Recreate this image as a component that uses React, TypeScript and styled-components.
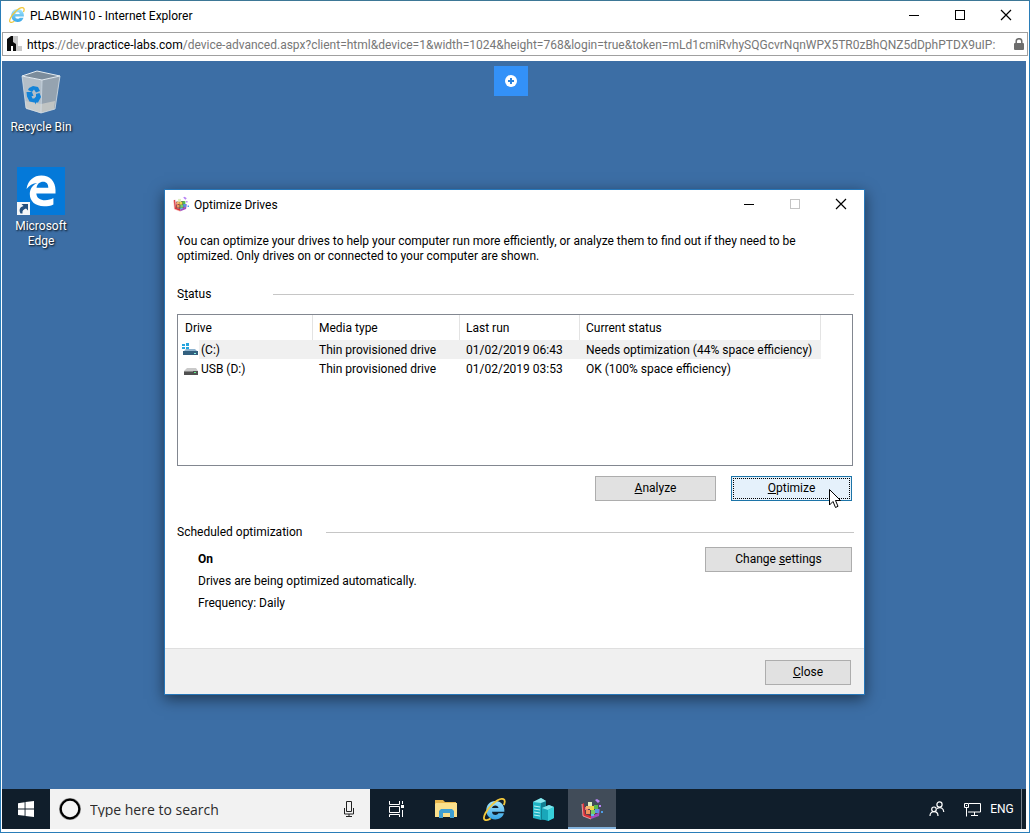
import React from 'react';
import styled, { createGlobalStyle, css } from 'styled-components';

const Global = createGlobalStyle`
  * { box-sizing: border-box; }
  body { margin: 0; font-family: Roboto, "Open Sans", sans-serif; font-size: 12px; line-height: 15px; color: #000; }
  button, input { font: inherit; color: inherit; }
  svg { display: block; flex: none; }
`;

const Frame = styled.div`
  display: flex;
  flex-direction: column;
  min-height: 100vh;
  border: 1px solid #2a7db8;
  border-top-color: #3d7796;
  background: #fff;
`;

const TitleBar = styled.header`
  display: flex;
  align-items: center;
  flex: none;
  height: 28px;
  padding-left: 8px;
  background: #fff;
`;

const WindowTitle = styled.h1`
  flex: 1;
  margin: 0 0 0 5px;
  padding-top: 2px;
  font-size: 12px;
  font-weight: 400;
`;

const CaptionButton = styled.button`
  display: grid;
  place-items: center;
  width: 46px;
  height: 28px;
  padding: 0;
  border: 0;
  background: none;
  color: #000;
  &:disabled { color: #c4c4c4; }
`;

const AddressBar = styled.div`
  display: flex;
  align-items: center;
  gap: 5px;
  flex: none;
  height: 24px;
  margin: 3px 1px 5px;
  padding: 0 3px 0 4px;
  border: 1px solid #a0a0a0;
`;

const Url = styled.div`
  flex: 1;
  min-width: 0;
  overflow: hidden;
  padding-top: 2px;
  white-space: nowrap;
  color: #777;
  line-height: 18px;
  b { font-weight: 400; color: #000; }
`;

const Screen = styled.div`
  display: flex;
  flex-direction: column;
  flex: 1;
  margin: 0 3px 3px 1px;
`;

const Desktop = styled.main`
  position: relative;
  flex: 1;
  min-height: 660px;
  background: #3c6ea5;
`;

const Shortcuts = styled.nav`
  display: flex;
  flex-direction: column;
  gap: 32px;
  width: 78px;
  padding-top: 9px;
`;

const Shortcut = styled.a`
  display: flex;
  flex-direction: column;
  align-items: center;
  gap: 4px;
  color: #fff;
  text-align: center;
  text-decoration: none;
  text-shadow: 1px 1px 2px #000;
`;

const ToolbarTab = styled.button`
  position: absolute;
  top: 5px;
  left: 50%;
  display: grid;
  place-items: center;
  width: 34px;
  height: 30px;
  padding: 0;
  border: 0;
  transform: translateX(-20px);
  background: #3391f8;
`;

const Dialog = styled.section`
  position: absolute;
  top: 128px;
  left: 162px;
  width: 701px;
  border: 1px solid #2676b8;
  background: #fff;
  box-shadow: 0 4px 14px rgba(0, 0, 0, 0.5);
`;

const DialogBody = styled.div`
  padding: 16px 10px 37px 12px;
`;

const Intro = styled.p`
  margin: 0 0 22px;
`;

const SectionHeading = styled.h2<{ $label: number }>`
  display: grid;
  grid-template-columns: ${p => p.$label}px 1fr;
  align-items: center;
  margin: 0;
  font-size: 12px;
  font-weight: 400;
  line-height: 16px;
  &::after { content: ""; height: 1px; background: #c6c6c6; }
`;

const ListBox = styled.div`
  height: 152px;
  margin: 12px 1px 10px 0;
  border: 1px solid #828790;
`;

const DriveTable = styled.table`
  width: 643px;
  border-collapse: separate;
  border-spacing: 0;
  table-layout: fixed;
`;

const HeadCell = styled.th<{ $width: number }>`
  width: ${p => p.$width}px;
  height: 25px;
  padding: 2px 0 0 6px;
  border-right: 1px solid #e3e3e3;
  font-weight: 400;
  text-align: left;
  &:first-child { padding-left: 7px; }
`;

const Row = styled.tr<{ $selected?: boolean }>`
  background: ${p => (p.$selected ? '#f0f0f0' : 'transparent')};
`;

const Cell = styled.td`
  height: 19px;
  padding: 2px 0 0 6px;
  white-space: nowrap;
`;

const DriveCell = styled(Cell)`
  padding: 0;
`;

const DriveName = styled.div`
  display: flex;
  align-items: center;
  gap: 2px;
`;

const DriveLabel = styled.span`
  padding-top: 2px;
`;

const DriveIcon = styled.span`
  display: flex;
  justify-content: flex-end;
  align-items: center;
  width: 21px;
  height: 19px;
  padding-right: 1px;
  background: #fff;
`;

const ButtonRow = styled.div`
  display: flex;
  justify-content: flex-end;
  gap: 15px;
  margin: 0 2px 23px 0;
`;

const PushButton = styled.button<{ $width: number; $focused?: boolean }>`
  width: ${p => p.$width}px;
  height: 25px;
  padding: 0;
  border: 1px solid #adadad;
  background: #e1e1e1;
  ${p => p.$focused && css`
    border-color: #1c74a8;
    background: #e5f1fb;
    outline: 1px dotted #000;
    outline-offset: -3px;
  `}
`;

const Schedule = styled.div`
  display: flex;
  justify-content: space-between;
  align-items: flex-start;
  margin: 6px 2px 0 21px;
`;

const ScheduleText = styled.div`
  display: grid;
  gap: 7px;
  padding-top: 6px;
  p { margin: 0; }
`;

const ScheduleAction = styled.div`
  padding-top: 1px;
`;

const DialogFooter = styled.footer`
  display: flex;
  justify-content: flex-end;
  padding: 11px 13px 9px;
  border-top: 1px solid #dfdfdf;
  background: #f0f0f0;
`;

const Pointer = styled.svg`
  position: absolute;
  top: 299px;
  left: 664px;
`;

const Taskbar = styled.footer`
  display: flex;
  flex: none;
  height: 40px;
  background: #101e2b;
  color: #fff;
`;

const RunningApps = styled.div`
  display: flex;
  padding-left: 2px;
`;

const TaskButton = styled.button<{ $active?: boolean }>`
  display: grid;
  place-items: center;
  width: ${p => (p.$active ? 48 : 49)}px;
  height: 40px;
  padding: 0;
  border: 0;
  background: ${p => (p.$active ? '#414c59' : 'none')};
  box-shadow: ${p => (p.$active ? 'inset 0 -2px #84b4de' : 'none')};
`;

const StartButton = styled(TaskButton)`
  width: 48px;
`;

const SearchBox = styled.label`
  display: flex;
  align-items: center;
  gap: 8px;
  width: 320px;
  padding: 0 15px 0 8px;
  background: #f2f2f2;
`;

const SearchInput = styled.input`
  flex: 1;
  min-width: 0;
  padding: 0;
  border: 0;
  background: none;
  font-family: "Open Sans", sans-serif;
  font-size: 14px;
  outline: 0;
  &::placeholder { color: #2b2b2b; opacity: 1; }
`;

const Tray = styled.div`
  display: flex;
  align-items: center;
  margin-left: auto;
`;

const TrayButton = styled.button<{ $width: number }>`
  display: grid;
  place-items: center;
  width: ${p => p.$width}px;
  height: 40px;
  padding: 0;
  border: 0;
  background: none;
`;

const ShowDesktop = styled.button`
  width: 5px;
  height: 40px;
  padding: 0;
  border: 0;
  border-left: 1px solid #76808a;
  background: none;
`;

const MinimizeIcon = () => (
  <svg width="10" height="10"><path d="M0 5.500H10" stroke="currentColor" /></svg>
);
const MaximizeIcon = () => (
  <svg width="10" height="10"><rect x=".5" y=".5" width="9" height="9" fill="none" stroke="currentColor" /></svg>
);
const CloseIcon = () => (
  <svg width="12" height="12"><path d="M1 1 11 11M11 1 1 11" stroke="currentColor" strokeWidth="1.2" /></svg>
);

const IeIcon = ({ size }: { size: number }) => (
  <svg width={size} height={size} viewBox="0 0 24 24">
    <defs>
      <linearGradient id="ieBlue" x2="0" y2="1">
        <stop stopColor="#a6e6fd" /><stop offset="1" stopColor="#35a5e6" />
      </linearGradient>
    </defs>
    <path d="M12.800 3C7.300 3 3.400 7.300 3.400 12.800S7.300 22.500 12.800 22.500c4.300 0 7.700-2.400 9-6.500h-5.700c-.7 1.200-1.700 1.700-3.100 1.700-2.200 0-3.500-1.300-3.600-3.400h12.900c.6-6.500-3.400-11.300-9.500-11.300Zm-3.400 7.500c.4-1.800 1.600-2.800 3.500-2.800 1.800 0 3 1 3.300 2.800Z" fill="url(#ieBlue)" />
    <path d="M21.700 7.500c1.500-3.200 1.300-5.600-.4-6.300-2.300-.9-7 1.300-11.500 5.500C3.600 12.600-.2 19.500 1.300 22.200c.9 1.600 3.600 1 6.700-.8" fill="none" stroke="#f2c83c" strokeWidth="1.900" />
  </svg>
);

const SiteIcon = () => (
  <svg width="15" height="16" viewBox="0 0 15 16">
    <path d="M6 0h5v10h4v5H6Z" fill="#c9c9c9" />
    <path d="M0 3 4 0h2v6l3 2v7H6v-5H4v5H0Z" fill="#0c0c0c" />
  </svg>
);

const LockIcon = () => (
  <svg width="10" height="13" viewBox="0 0 10 13">
    <rect y="5" width="10" height="7" rx="1" fill="#6d6d6d" />
    <path d="M2.200 6V3.500a2.800 2.800 0 0 1 5.600 0V6" fill="none" stroke="#6d6d6d" strokeWidth="1.500" />
  </svg>
);

const RecycleBinIcon = () => (
  <svg width="48" height="46" viewBox="0 0 48 46">
    <path d="M5 6 25 10 24 43 9 38Z" fill="#b3bec8" />
    <path d="M25 10 43 6 38 39 24 43Z" fill="#95a3b0" />
    <path d="M8 31 24 34 38 31 37 39 24 43 9 39Z" fill="#d3d2cc" opacity=".7" />
    <path d="M5 6 20 1 43 6 25 10Z" fill="#7b8c9c" stroke="#e3ebf1" />
    <path d="M5 6 9 38 24 43 38 39 43 6M25 10 24 43" fill="none" stroke="#d5dfe7" strokeWidth=".8" />
    <g fill="#1383d8">
      <path d="m12 18 4-2 5 1 2 4-4 1.500-2-3-2 2.500-4-2Z" />
      <path d="m9.500 22 5.500 0 1.500 4-2 0 1 2.500 2 0 0 4-5-1-2.500-5Z" />
      <path d="m19 24 3.500-1 1.500 4-3 5.500-2 0 0 2-3-4.500 3-3.500 0 2Z" />
    </g>
  </svg>
);

const EdgeIcon = () => (
  <svg width="48" height="48" viewBox="0 0 48 48">
    <rect width="48" height="48" fill="#0479d9" />
    <path d="M9.500 22C11 13 17 8.500 24.300 8.500 33 8.500 38.500 14.500 38.500 23v3.500H19.300c.3 4.500 4 6.800 8.700 6.800 3.400 0 6.200-.9 8.400-2.200v6.300c-2.900 1.400-5.700 1.900-9.400 1.900-8.600 0-14.200-4.800-14.200-12.200 0-5.300 2.900-9 7.600-11.100-4.700.3-8.300 2.600-10.900 6Zm10-1.200h11.800c0-3.800-1.800-6-5.100-6-3.600 0-6 2.300-6.700 6Z" fill="#fff" />
    <rect y="35" width="13" height="13" fill="#f4f6f8" />
    <path d="M3.500 46.500c-2-4-.5-6.500 3-7.500L4.500 37H11v6.500l-2-2C6.500 42.500 5 43.500 5.500 46.500Z" fill="#24507f" />
  </svg>
);

const DefragIcon = ({ size }: { size: number }) => (
  <svg width={size} height={size} viewBox="0 0 22 22">
    <path d="M1 6 3 5 4 16 10 18 10 21 2 18Z" fill="#dc3038" />
    <path d="M10 18 17 15 17 12 19 11 18 18 10 21Z" fill="#a04cc0" />
    <path d="M4 8 15 7 17 15 10 18 4 16Z" fill="#5a3c48" />
    <path d="M4 9h3v3H4Z" fill="#e8757c" />
    <path d="M7 4h4v4H7Z" fill="#dff0c0" />
    <path d="M5 8h4v3H5Z" fill="#f2b66c" />
    <path d="M9 8h4v4H9Z" fill="#f0d548" />
    <path d="M13 7h4v4h-4Z" fill="#58b84e" />
    <path d="M5 12h4v4H5Z" fill="#f0945c" />
    <path d="M10 12h4v4h-4Z" fill="#78cc66" />
    <path d="M14 11h4v4h-4Z" fill="#5a92e2" />
    <path d="M10 16h3v2h-3Z" fill="#58c2e0" />
    <path d="M14 2 16 1 19 3 17 5ZM18 7h2v2h-2Z" fill="#b783f4" />
    <path d="M20 13h2v2h-2Z" fill="#4d9de8" />
    <path d="M1 6 2 18 10 21" fill="none" stroke="#f7b4b0" strokeWidth=".8" />
  </svg>
);

const SystemDriveIcon = () => (
  <svg width="16" height="14" viewBox="0 0 16 14">
    <path d="M0 1h3v2H0ZM4 0h3v3H4ZM0 4h3v2H0ZM4 4h3v3H4Z" fill="#27a5de" />
    <path d="M4 6h9l3 3H1Z" fill="#8fb4cf" />
    <path d="M1 8h15v4H1Z" fill="#33607f" />
    <path d="M12 10h2v1h-2Z" fill="#8cf5e4" />
  </svg>
);

const UsbDriveIcon = () => (
  <svg width="14" height="14" viewBox="0 0 14 14">
    <path d="M3 6h9l2 3H0Z" fill="#c9c9c9" />
    <path d="M0 9h14v4H0Z" fill="#505050" />
    <path d="M0 9h9v1H0Z" fill="#888" />
    <path d="M10 10h2v1h-2Z" fill="#5ff08a" />
  </svg>
);

const WindowsIcon = () => (
  <svg width="16" height="16" viewBox="0 0 16 16">
    <path d="M0 2.200 6.600 1.300V7.600H0ZM7.500 1.100 16 0V7.600H7.500ZM0 8.500H6.600V14.800L0 13.900ZM7.500 8.500H16V16L7.500 14.900Z" fill="#fff" />
  </svg>
);

const CortanaIcon = () => (
  <svg width="24" height="24" viewBox="0 0 24 24">
    <circle cx="12" cy="12" r="9.500" fill="none" stroke="#9b9b9b" strokeWidth="3" />
    <circle cx="12" cy="12" r="9.300" fill="#f5f5f5" stroke="#000" strokeWidth="2.200" />
  </svg>
);

const MicIcon = () => (
  <svg width="12" height="18" viewBox="0 0 12 18">
    <path d="M3.500 1.500h5v10h-5ZM1.500 8v6h9V8M6 14v3M3 16.500h6" fill="none" stroke="#222" />
  </svg>
);

const TaskViewIcon = () => (
  <svg width="17" height="16" viewBox="0 0 17 16">
    <path d="M1.500 0v3.500h10V0M1.500 5.500h10v6h-10ZM1.500 16v-2.500h10V16M14.500 0v3M14.500 9v7" fill="none" stroke="#fff" />
    <path d="M13 4h3v3h-3Z" fill="#fff" />
  </svg>
);

const FolderIcon = () => (
  <svg width="22" height="20" viewBox="0 0 22 20">
    <path d="M0 1h8l2 2h11v15H0Z" fill="#e8b64c" />
    <path d="M1 4h21v14H0V5Z" fill="#fbe08c" />
    <path d="M4 19v-7l2-2h11l2 2v7h-4v-5H8v5Z" fill="#3f9fd2" />
  </svg>
);

const ServerIcon = () => (
  <svg width="23" height="23" viewBox="0 0 23 23">
    <path d="M1 4 9 0 14 3V22L9 22 1 20Z" fill="#20b4c5" />
    <path d="M9 4 14 3V22H9Z" fill="#107f92" />
    <path d="M1 4 9 0 14 3 9 5Z" fill="#8ce9ef" />
    <path d="M2 8l6 1M2 11l6 1M2 14l6 1M2 17l6 1" stroke="#b7f4f6" />
    <path d="M10 10 17 7 22 9V20L16 23 10 21Z" fill="#19a7ba" />
    <path d="M10 10 17 7 22 9 16 12Z" fill="#7fe5ec" />
    <path d="M16 12 22 9V20L16 23Z" fill="#37cfda" />
  </svg>
);

const PeopleIcon = () => (
  <svg width="16" height="16" viewBox="0 0 16 16" fill="none" stroke="#fff" strokeWidth="1.200">
    <circle cx="10.500" cy="3.500" r="2.600" />
    <circle cx="5" cy="8.300" r="2.300" />
    <path d="M1 15c0-2.700 1.500-4.300 4-4.300S9 12.300 9 15M8 7.500c3.500-2 6.500-.3 6.800 3.500" />
  </svg>
);

const NetworkIcon = () => (
  <svg width="17" height="15" viewBox="0 0 17 15" fill="none" stroke="#fff">
    <path d="M5 1.500h11.500v8.500H4M10.500 10v3.500M7 13.500h7M.5 1.500h4v4h-4ZM2.500 5.500v9" />
    <path d="M2 3.500h1" />
  </svg>
);

const AddIcon = () => (
  <svg width="14" height="14" viewBox="0 0 14 14">
    <circle cx="7" cy="7" r="6" fill="#fff" />
    <path d="M7 4v6M4 7h6" stroke="#2c83dc" strokeWidth="2" />
  </svg>
);

const drives = [
  { name: '(C:)', icon: <SystemDriveIcon />, lastRun: '01/02/2019 06:43', status: 'Needs optimization (44% space efficiency)', selected: true },
  { name: 'USB (D:)', icon: <UsbDriveIcon />, lastRun: '01/02/2019 03:53', status: 'OK (100% space efficiency)', selected: false },
];

export default function App() {
  return (
    <Frame>
      <Global />
      <TitleBar>
        <IeIcon size={16} />
        <WindowTitle>PLABWIN10 - Internet Explorer</WindowTitle>
        <CaptionButton aria-label="Minimize"><MinimizeIcon /></CaptionButton>
        <CaptionButton aria-label="Maximize"><MaximizeIcon /></CaptionButton>
        <CaptionButton aria-label="Close window"><CloseIcon /></CaptionButton>
      </TitleBar>
      <AddressBar>
        <SiteIcon />
        <Url>
          <b>https</b>://dev.<b>practice-labs.com</b>/device-advanced.aspx?client=html&amp;device=1&amp;width=1024&amp;height=768&amp;login=true&amp;token=mLd1cmiRvhySQGcvrNqnWPX5TR0zBhQNZ5dDphPTDX9uIP:
        </Url>
        <LockIcon />
      </AddressBar>

      <Screen>
        <Desktop>
          <Shortcuts>
            <Shortcut href="#recycle-bin"><RecycleBinIcon />Recycle Bin</Shortcut>
            <Shortcut href="#edge"><EdgeIcon /><span>Microsoft<br />Edge</span></Shortcut>
          </Shortcuts>
          <ToolbarTab aria-label="Open toolbar"><AddIcon /></ToolbarTab>

          <Dialog role="dialog" aria-label="Optimize Drives">
            <TitleBar>
              <DefragIcon size={16} />
              <WindowTitle as="h2">Optimize Drives</WindowTitle>
              <CaptionButton aria-label="Minimize dialog"><MinimizeIcon /></CaptionButton>
              <CaptionButton aria-label="Maximize dialog" disabled><MaximizeIcon /></CaptionButton>
              <CaptionButton aria-label="Close dialog"><CloseIcon /></CaptionButton>
            </TitleBar>
            <DialogBody>
              <Intro>
                You can optimize your drives to help your computer run more efficiently, or analyze them to find out if they need to be<br />
                optimized. Only drives on or connected to your computer are shown.
              </Intro>
              <SectionHeading $label={96}><span>S<u>t</u>atus</span></SectionHeading>
              <ListBox>
                <DriveTable>
                  <thead>
                    <tr>
                      <HeadCell $width={135}>Drive</HeadCell>
                      <HeadCell $width={147}>Media type</HeadCell>
                      <HeadCell $width={120}>Last run</HeadCell>
                      <HeadCell $width={241}>Current status</HeadCell>
                    </tr>
                  </thead>
                  <tbody>
                    {drives.map(d => (
                      <Row key={d.name} $selected={d.selected}>
                        <DriveCell><DriveName><DriveIcon>{d.icon}</DriveIcon><DriveLabel>{d.name}</DriveLabel></DriveName></DriveCell>
                        <Cell>Thin provisioned drive</Cell>
                        <Cell>{d.lastRun}</Cell>
                        <Cell>{d.status}</Cell>
                      </Row>
                    ))}
                  </tbody>
                </DriveTable>
              </ListBox>
              <ButtonRow>
                <PushButton $width={121}><u>A</u>nalyze</PushButton>
                <PushButton $width={121} $focused><u>O</u>ptimize</PushButton>
              </ButtonRow>
              <SectionHeading $label={149}>Scheduled optimization</SectionHeading>
              <Schedule>
                <ScheduleText>
                  <strong>On</strong>
                  <p>Drives are being optimized automatically.</p>
                  <p>Frequency: Daily</p>
                </ScheduleText>
                <ScheduleAction>
                  <PushButton $width={147}>Change <u>s</u>ettings</PushButton>
                </ScheduleAction>
              </Schedule>
            </DialogBody>
            <DialogFooter>
              <PushButton $width={86}><u>C</u>lose</PushButton>
            </DialogFooter>
            <Pointer width="13" height="20" viewBox="0 0 13 20">
              <path d="M.5.500V16L4 12.500 6.500 18.500 9 17.300 6.500 11.500H11.500Z" fill="#fff" stroke="#000" />
            </Pointer>
          </Dialog>
        </Desktop>

        <Taskbar>
          <StartButton aria-label="Start"><WindowsIcon /></StartButton>
          <SearchBox>
            <CortanaIcon />
            <SearchInput type="text" aria-label="Search" placeholder="Type here to search" />
            <MicIcon />
          </SearchBox>
          <RunningApps>
            <TaskButton aria-label="Task view"><TaskViewIcon /></TaskButton>
            <TaskButton aria-label="File Explorer"><FolderIcon /></TaskButton>
            <TaskButton aria-label="Internet Explorer"><IeIcon size={23} /></TaskButton>
            <TaskButton aria-label="Server Manager"><ServerIcon /></TaskButton>
            <TaskButton aria-label="Optimize Drives" $active><DefragIcon size={22} /></TaskButton>
          </RunningApps>
          <Tray>
            <TrayButton $width={48} aria-label="People"><PeopleIcon /></TrayButton>
            <TrayButton $width={22} aria-label="Network"><NetworkIcon /></TrayButton>
            <TrayButton $width={38}>ENG</TrayButton>
            <ShowDesktop aria-label="Show desktop" />
          </Tray>
        </Taskbar>
      </Screen>
    </Frame>
  );
}
